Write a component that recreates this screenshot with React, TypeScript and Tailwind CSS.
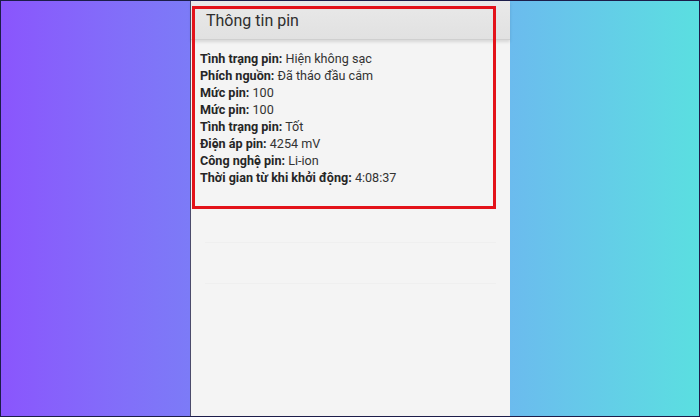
const rows: [string, string][] = [
  ['Tình trạng pin:', 'Hiện không sạc'],
  ['Phích nguồn:', 'Đã tháo đầu cắm'],
  ['Mức pin:', '100'],
  ['Mức pin:', '100'],
  ['Tình trạng pin:', 'Tốt'],
  ['Điện áp pin:', '4254 mV'],
  ['Công nghệ pin:', 'Li-ion'],
  ['Thời gian từ khi khởi động:', '4:08:37'],
];

export default function App() {
  return (
    <div className="w-[700px] h-[417px] flex border border-[#1c1d4a] overflow-hidden font-['Roboto',sans-serif]">
      {/* left gradient */}
      <div className="w-[189px] h-full bg-gradient-to-r from-[#8a55fd] to-[#7c7bf7]" />

      {/* phone screen */}
      <div className="w-[320px] h-full bg-[#f4f4f4] border-l border-[#4a4a6a] flex flex-col">
        <div className="relative">
          <div className="h-[39px] bg-gradient-to-b from-[#e9e9e9] to-[#e1e1e1] border-b border-[#cfcfcf] shadow-[0_2px_3px_rgba(0,0,0,0.12)] flex items-center pl-[15px]">
            <span className="text-[16px] text-[#2e2e2e] leading-none pt-[1px]">Thông tin pin</span>
          </div>
          <div className="pt-[10px] pl-[9px] flex flex-col text-[12.6px] leading-[17px] text-[#262626]">
            {rows.map(([label, value], i) => (
              <div key={i}>
                <span className="font-bold">{label}</span> <span className="text-[#333]">{value}</span>
              </div>
            ))}
          </div>
          {/* red highlight box */}
          <div className="absolute left-[1px] top-[5px] w-[304px] h-[203px] border-[3px] border-[#e3121a]" />
        </div>
        <div className="mt-[56px] mx-[14px] h-px bg-[#efefef]" />
        <div className="mt-[40px] mx-[14px] h-px bg-[#efefef]" />
      </div>

      {/* right gradient */}
      <div className="flex-1 h-full bg-gradient-to-r from-[#6bbbee] to-[#5adfe0]" />
    </div>
  );
}
